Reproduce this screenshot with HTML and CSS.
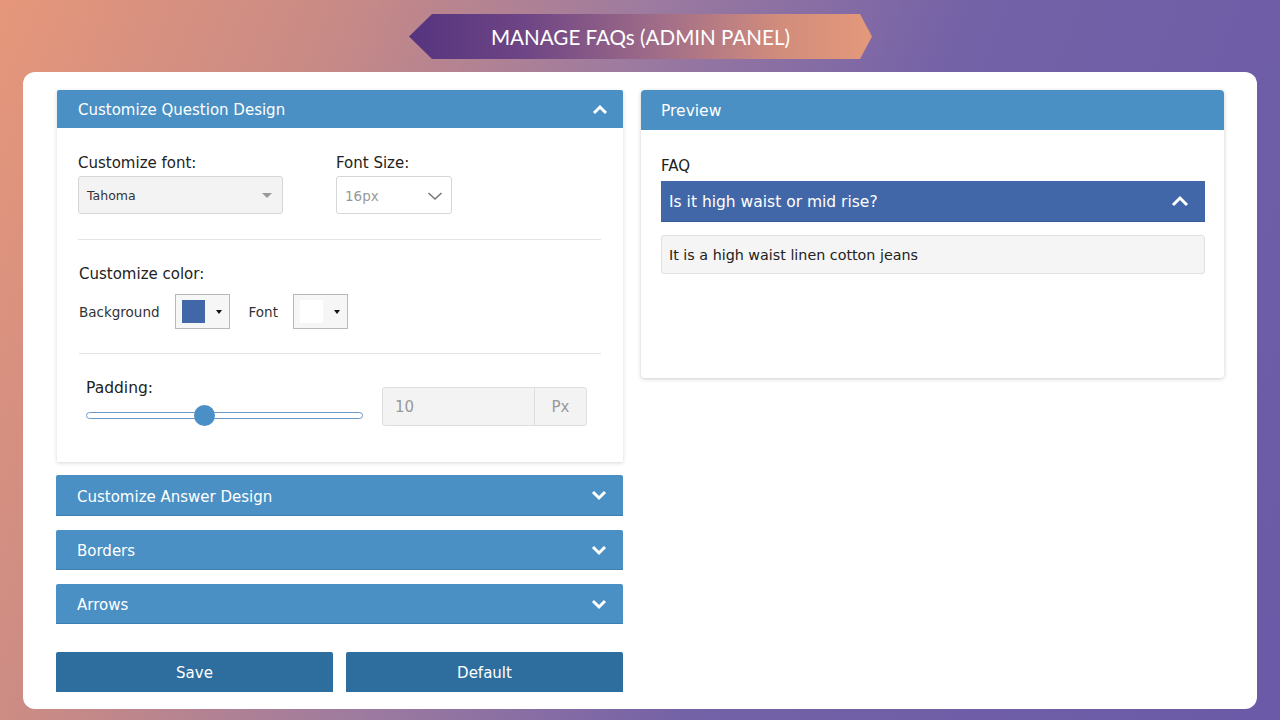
FILE: index.html
```html
<!DOCTYPE html>
<html>
<head>
<meta charset="utf-8">
<link rel="stylesheet" href="styles.css">
</head>
<body>
<div class="top">
  <div class="banner">MANAGE FAQs (ADMIN PANEL)</div>
</div>
<div class="sheet">
  <div class="left">
    <div class="panel open">
      <div class="phead">
        <span>Customize Question Design</span>
        <svg class="chev" width="16" height="11" viewBox="0 0 16 11"><polyline points="2,9 8,3 14,9" fill="none" stroke="#fff" stroke-width="3"/></svg>
      </div>
      <div class="pbody">
        <div class="fontrow">
          <div class="fcol">
            <div class="lbl">Customize font:</div>
            <div class="sel sel-font"><span>Tahoma</span><span class="tri"></span></div>
          </div>
          <div class="fcol">
            <div class="lbl">Font Size:</div>
            <div class="sel sel-size"><span>16px</span>
              <svg width="16" height="10" viewBox="0 0 16 10"><polyline points="1.5,2 8,8 14.5,2" fill="none" stroke="#777" stroke-width="1.6"/></svg>
            </div>
          </div>
        </div>
        <div class="divider"></div>
        <div class="lbl lbl-color">Customize color:</div>
        <div class="colorrow">
          <span class="clbl">Background</span>
          <div class="picker"><span class="swatch blue"></span><span class="ptri"></span></div>
          <span class="clbl">Font</span>
          <div class="picker"><span class="swatch white"></span><span class="ptri"></span></div>
        </div>
        <div class="divider d2"></div>
        <div class="padrow">
          <div class="padleft">
            <div class="lbl plbl">Padding:</div>
            <div class="slider"><div class="track"></div><div class="thumb"></div></div>
          </div>
          <div class="igroup">
            <div class="ival">10</div>
            <div class="iaddon">Px</div>
          </div>
        </div>
      </div>
    </div>
    <div class="phead closed first">
      <span>Customize Answer Design</span>
      <svg class="chev" width="16" height="11" viewBox="0 0 16 11"><polyline points="2,2 8,8 14,2" fill="none" stroke="#fff" stroke-width="3"/></svg>
    </div>
    <div class="phead closed">
      <span>Borders</span>
      <svg class="chev" width="16" height="11" viewBox="0 0 16 11"><polyline points="2,2 8,8 14,2" fill="none" stroke="#fff" stroke-width="3"/></svg>
    </div>
    <div class="phead closed">
      <span>Arrows</span>
      <svg class="chev" width="16" height="11" viewBox="0 0 16 11"><polyline points="2,2 8,8 14,2" fill="none" stroke="#fff" stroke-width="3"/></svg>
    </div>
    <div class="buttons">
      <button class="btn">Save</button>
      <button class="btn">Default</button>
    </div>
  </div>
  <div class="right">
    <div class="preview">
      <div class="prhead">Preview</div>
      <div class="prbody">
        <div class="faq">FAQ</div>
        <div class="q">
          <span>Is it high waist or mid rise?</span>
          <svg width="18" height="12" viewBox="0 0 18 12"><polyline points="2,10 9,3 16,10" fill="none" stroke="#fff" stroke-width="3"/></svg>
        </div>
        <div class="a">It is a high waist linen cotton jeans</div>
      </div>
    </div>
  </div>
</div>
</body>
</html>
```

FILE: styles.css
```css
* { box-sizing: border-box; }
html, body { margin: 0; padding: 0; }
body {
  width: 1280px;
  height: 720px;
  overflow: hidden;
  font-family: "DejaVu Sans", Verdana, sans-serif;
  color: #222;
  background: linear-gradient(112deg, #e6977a 0%, #c88a86 22%, #9c7aa0 42%, #7462a7 62%, #6a5aa7 100%);
}
.top {
  height: 72px;
  display: flex;
  justify-content: center;
  padding-top: 14px;
}
.banner {
  width: 463px;
  height: 45px;
  margin-left: 1px;
  display: flex;
  align-items: center;
  justify-content: center;
  font-family: Lato, "Open Sans", sans-serif;
  font-size: 20.6px;
  color: #fff;
  background: linear-gradient(90deg, #55347f 0%, #6e4585 25%, #a26e88 55%, #d18c7c 80%, #e4997a 100%);
  clip-path: polygon(23px 0, 451px 0, 100% 50%, 451px 100%, 23px 100%, 0 50%);
}
.sheet {
  margin: 0 23px;
  height: 637px;
  background: #fff;
  border-radius: 12px;
  padding: 18px 33px 0 33px;
  display: grid;
  grid-template-columns: 567px 583px;
  gap: 18px;
}
.left { display: flex; flex-direction: column; }
.panel {
  margin: 0 0 0 1px;
  background: #fff;
  box-shadow: 0 1px 4px rgba(0,0,0,0.16);
}
.phead {
  height: 38px;
  background: #4a90c4;
  color: #fff;
  font-size: 15px;
  display: flex;
  align-items: center;
  justify-content: space-between;
  padding: 2px 15px 0 21px;
  border-radius: 2px 2px 0 0;
}
.phead .chev { flex: none; margin-top: -2px; }
.phead.closed {
  height: 40px;
  margin-top: 14px;
  border-bottom: 1px solid #3f7fb0;
  padding-right: 16px;
  padding-top: 3px;
}
.phead.first { margin-top: 13px; height: 41px; }
.pbody { padding: 25px 22px 36px 21px; }
.lbl { font-size: 15px; line-height: 20px; height: 21px; }
.fontrow { display: flex; gap: 53px; }
.sel {
  height: 38px;
  border: 1px solid #d6d6d6;
  border-radius: 3px;
  display: flex;
  align-items: center;
  justify-content: space-between;
  margin-top: 2px;
}
.sel-font {
  width: 205px;
  background: #f3f3f3;
  padding: 1px 10px 0 8px;
  font-size: 12.5px;
  color: #333;
}
.tri {
  width: 0; height: 0;
  border-left: 5px solid transparent;
  border-right: 5px solid transparent;
  border-top: 5px solid #999;
}
.sel-size {
  width: 116px;
  background: #fff;
  padding: 1px 8px 0 8px;
  font-size: 13.5px;
  color: #999;
}
.divider { height: 1px; background: #e3e3e3; margin-top: 25px; }
.lbl-color { margin: 24px 0 0 1px; }
.colorrow {
  display: flex;
  align-items: center;
  margin-top: 9px;
  padding-left: 1px;
}
.clbl { font-size: 13.5px; color: #333; padding-top: 1px; }
.picker {
  width: 55px;
  height: 35px;
  border: 1px solid #b9b9b9;
  background: #f6f6f6;
  display: flex;
  align-items: center;
  padding: 0 7px 0 6px;
  justify-content: space-between;
  margin: 0 19px 0 15px;
}
.swatch { width: 23px; height: 23px; display: block; }
.swatch.blue { background: #4267a8; }
.swatch.white { background: #fff; }
.ptri {
  width: 0; height: 0;
  border-left: 3.5px solid transparent;
  border-right: 3.5px solid transparent;
  border-top: 4px solid #111;
}
.d2 { margin-top: 24px; margin-left: 1px; }
.padrow {
  display: flex;
  align-items: flex-end;
  margin-top: 22px;
  padding-left: 8px;
  gap: 19px;
}
.padleft { width: 277px; }
.plbl { font-size: 15.5px; height: 29px; padding-top: 2px; }
.slider { position: relative; height: 21px; }
.track {
  position: absolute;
  left: 0; right: 0; top: 7px;
  height: 7px;
  border: 1px solid #6b98c6;
  border-radius: 4px;
  background: #fff;
}
.thumb {
  position: absolute;
  left: 108px; top: 0;
  width: 21px; height: 21px;
  border-radius: 50%;
  background: #4a8fc6;
}
.igroup {
  width: 205px;
  height: 39px;
  display: flex;
  border: 1px solid #dedede;
  border-radius: 3px;
  background: #f3f3f3;
  font-size: 15px;
  color: #999;
}
.ival { flex: 1; display: flex; align-items: center; padding: 1px 0 0 12px; }
.iaddon {
  width: 52px;
  border-left: 1px solid #dedede;
  display: flex; align-items: center; justify-content: center;
  padding-top: 1px;
}
.buttons {
  display: grid;
  grid-template-columns: 277px 277px;
  gap: 13px;
  margin-top: 28px;
}
.btn {
  height: 40px;
  border: none;
  border-radius: 2px 2px 0 0;
  background: #2d6e9e;
  color: #fff;
  font-family: "DejaVu Sans", Verdana, sans-serif;
  font-size: 15px;
  padding: 2px 0 0 0;
}
.preview {
  height: 288px;
  background: #fff;
  border-radius: 4px;
  box-shadow: 0 1px 4px rgba(0,0,0,0.2);
  overflow: hidden;
}
.prhead {
  height: 40px;
  background: #4a90c4;
  color: #fff;
  font-size: 15.5px;
  display: flex;
  align-items: center;
  padding: 2px 0 0 20px;
}
.prbody { padding: 26px 19px 0 20px; }
.faq { font-size: 15px; line-height: 20px; }
.q {
  margin-top: 5px;
  height: 41px;
  background: #4267a8;
  color: #fff;
  font-size: 15.5px;
  display: flex;
  align-items: center;
  justify-content: space-between;
  padding: 2px 16px 0 8px;
  border-bottom: 1px solid #3a5c98;
}
.q svg { margin-top: -2px; }
.a {
  margin-top: 13px;
  height: 39px;
  background: #f5f5f5;
  border: 1px solid #e0e0e0;
  border-radius: 3px;
  font-size: 14.3px;
  display: flex;
  align-items: center;
  padding: 1px 0 0 7px;
  color: #222;
}
```
